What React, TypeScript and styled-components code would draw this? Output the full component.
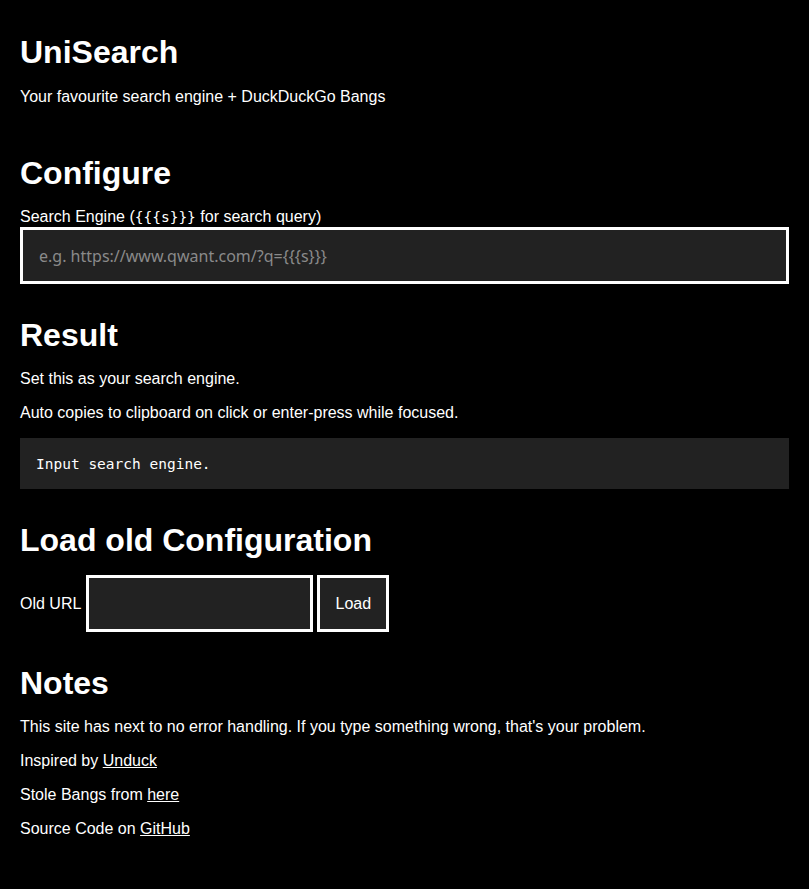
import React from 'react';
import styled, { createGlobalStyle } from 'styled-components';

const GlobalStyle = createGlobalStyle`
  html, body {
    margin: 0;
    background: #000;
    color: #fff;
    font-family: 'Liberation Sans', Arial, sans-serif;
    font-size: 16px;
    line-height: 1.15;
  }
  * {
    box-sizing: border-box;
  }
`;

const Page = styled.main`
  padding: 33px 20px 40px;
  display: flex;
  flex-direction: column;
  gap: 32px;
`;

const Header = styled.header`
  display: flex;
  flex-direction: column;
  gap: 17px;
  margin-bottom: 16px;
`;

const Section = styled.section`
  display: flex;
  flex-direction: column;
  gap: 16px;
`;

const Title = styled.h1`
  margin: 0;
  font-size: 32px;
  font-weight: 700;
  line-height: 38px;
`;

const Heading = styled.h2`
  margin: 0;
  font-size: 32px;
  font-weight: 700;
  line-height: 38px;
`;

const Text = styled.p`
  margin: 0;
  line-height: 18px;
`;

const Field = styled.label`
  display: flex;
  flex-direction: column;
  gap: 1px;
`;

const Code = styled.code`
  font-family: 'DejaVu Sans Mono', monospace;
  font-size: 14.5px;
`;

const TextInput = styled.input<{ $width?: string }>`
  width: ${(p) => p.$width ?? '100%'};
  height: 57px;
  padding: 0 16px;
  background: #222;
  color: #fff;
  border: 3px solid #fff;
  border-radius: 0;
  font-family: 'Noto Sans', 'Liberation Sans', sans-serif;
  font-size: 16px;
  outline: none;

  &::placeholder {
    color: #8a8a8a;
  }
`;

const Output = styled.pre`
  margin: 0;
  padding: 17px 16px 15px;
  background: #222;
  font-family: 'DejaVu Sans Mono', monospace;
  font-size: 14.5px;
  line-height: 19px;
  color: #fff;
`;

const Row = styled.div`
  display: flex;
  align-items: center;
  gap: 4px;
`;

const RowLabel = styled.span`
  margin-right: 1px;
`;

const Button = styled.button`
  width: 72px;
  height: 57px;
  padding: 0;
  background: #222;
  color: #fff;
  border: 3px solid #fff;
  border-radius: 0;
  font-family: 'Liberation Sans', Arial, sans-serif;
  font-size: 16px;
  cursor: pointer;
`;

const Link = styled.a`
  color: #fff;
  text-decoration: underline;
`;

export default function App() {
  return (
    <>
      <GlobalStyle />
      <Page>
        <Header>
          <Title>UniSearch</Title>
          <Text>Your favourite search engine + DuckDuckGo Bangs</Text>
        </Header>

        <Section>
          <Heading>Configure</Heading>
          <Field>
            <span>
              Search Engine (<Code>{'{{{s}}}'}</Code> for search query)
            </span>
            <TextInput type='text' placeholder='e.g. https://www.qwant.com/?q={{{s}}}' />
          </Field>
        </Section>

        <Section>
          <Heading>Result</Heading>
          <Text>Set this as your search engine.</Text>
          <Text>Auto copies to clipboard on click or enter-press while focused.</Text>
          <Output>Input search engine.</Output>
        </Section>

        <Section>
          <Heading>Load old Configuration</Heading>
          <Row>
            <RowLabel>Old URL</RowLabel>
            <TextInput type='text' $width='227px' />
            <Button>Load</Button>
          </Row>
        </Section>

        <Section>
          <Heading>Notes</Heading>
          <Text>This site has next to no error handling. If you type something wrong, that's your problem.</Text>
          <Text>
            Inspired by <Link href='#'>Unduck</Link>
          </Text>
          <Text>
            Stole Bangs from <Link href='#'>here</Link>
          </Text>
          <Text>
            Source Code on <Link href='#'>GitHub</Link>
          </Text>
        </Section>
      </Page>
    </>
  );
}
